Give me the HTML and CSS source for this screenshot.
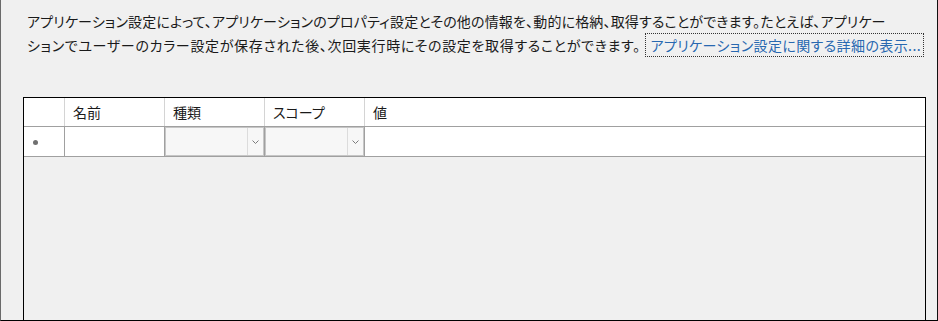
FILE: index.html
```html
<!DOCTYPE html>
<html lang="ja">
<head>
<title>設定</title>
<meta charset="UTF-8">
<link rel="stylesheet" href="styles.css">
</head>
<body>

<div class="frame">
  <p class="intro">
    <span class="line first">アプリケーション設定によって、アプリケーションのプロパティ設定とその他の情報を、動的に格納、取得することができます。たとえば、アプリケー</span>
    <span class="line second">ションでユーザーのカラー設定が保存された後、次回実行時にその設定を取得することができます。 <a class="more" href="#">アプリケーション設定に関する詳細の表示...</a></span>
  </p>

  <div class="grid">
    <div class="row head">
      <div class="cell rowhdr"></div>
      <div class="cell name">名前</div>
      <div class="cell type">種類</div>
      <div class="cell scope">スコープ</div>
      <div class="cell value">値</div>
    </div>
    <div class="row data">
      <div class="cell rowhdr"><span class="mark"></span></div>
      <div class="cell name"></div>
      <div class="cell type"><div class="combo"><span class="drop"><svg width="7" height="4" viewBox="0 0 7 4"><path d="M0.5 0.5 L3.5 3.5 L6.5 0.5" fill="none" stroke="#7a7a7a" stroke-width="1"/></svg></span></div></div>
      <div class="cell scope"><div class="combo"><span class="drop"><svg width="7" height="4" viewBox="0 0 7 4"><path d="M0.5 0.5 L3.5 3.5 L6.5 0.5" fill="none" stroke="#7a7a7a" stroke-width="1"/></svg></span></div></div>
      <div class="cell value"></div>
    </div>
  </div>
</div>

</body>
</html>
```

FILE: styles.css
```css
* {
  box-sizing: border-box;
}

body {
  margin: 0;
  background: #f0f0f0;
  font-family: "Noto Sans CJK JP", "Noto Sans", sans-serif;
  font-size: 14px;
  font-feature-settings: "palt";
  color: #1a1a1a;
}

/* outer window */
.frame {
  width: 938px;
  height: 321px;
  border-left: 1px solid #6a6a6a;
  border-right: 1px solid #111;
  border-bottom: 1px solid #000;
  display: flex;
  flex-direction: column;
}

/* description text */
.intro {
  margin: 0;
  padding: 9px 0 0 26px;
  line-height: 24px;
  height: 97px;
}

.intro .line {
  display: block;
  white-space: nowrap;
}

.intro .first {
  letter-spacing: 0.16px;
}

.intro .second {
  letter-spacing: 0.66px;
}

.more {
  color: #2868b0;
  text-decoration: none;
  border: 1px dotted #333;
  padding: 1px 2px 1px 5px;
  letter-spacing: 0.4px;
}

/* settings grid */
.grid {
  margin-left: 22px;
  width: 903px;
  flex: 1;
  border: 1px solid #000;
  border-bottom: none;
  background: #f0f0f0;
}

.row {
  display: flex;
  background: #fff;
}

.row.head {
  height: 29px;
  border-bottom: 1px solid #a0a0a0;
}

.row.data {
  height: 30px;
  border-bottom: 1px solid #a0a0a0;
}

.cell {
  height: 100%;
  border-right: 1px solid #a0a0a0;
  padding-left: 8px;
  line-height: 28px;
}

.head .cell {
  border-right-color: #d4d4d4;
}

.rowhdr {
  width: 41px;
  padding: 0 0 0 9px;
  display: flex;
  align-items: center;
}
.name, .type, .scope {
  width: 100px;
}
.value {
  flex: 1;
  border-right: none;
}

.data .type, .data .scope {
  padding: 0;
}

.mark {
  width: 5px;
  height: 5px;
  border-radius: 50%;
  background: #707070;
  margin-top: 1px;
}

/* combo cell */
.combo {
  height: 100%;
  border: 1px solid #c6c6c6;
  background: #f7f7f7;
  display: flex;
  justify-content: flex-end;
}

.drop {
  width: 16px;
  border-left: 1px solid #dcdcdc;
  display: flex;
  align-items: center;
  justify-content: center;
}
```
